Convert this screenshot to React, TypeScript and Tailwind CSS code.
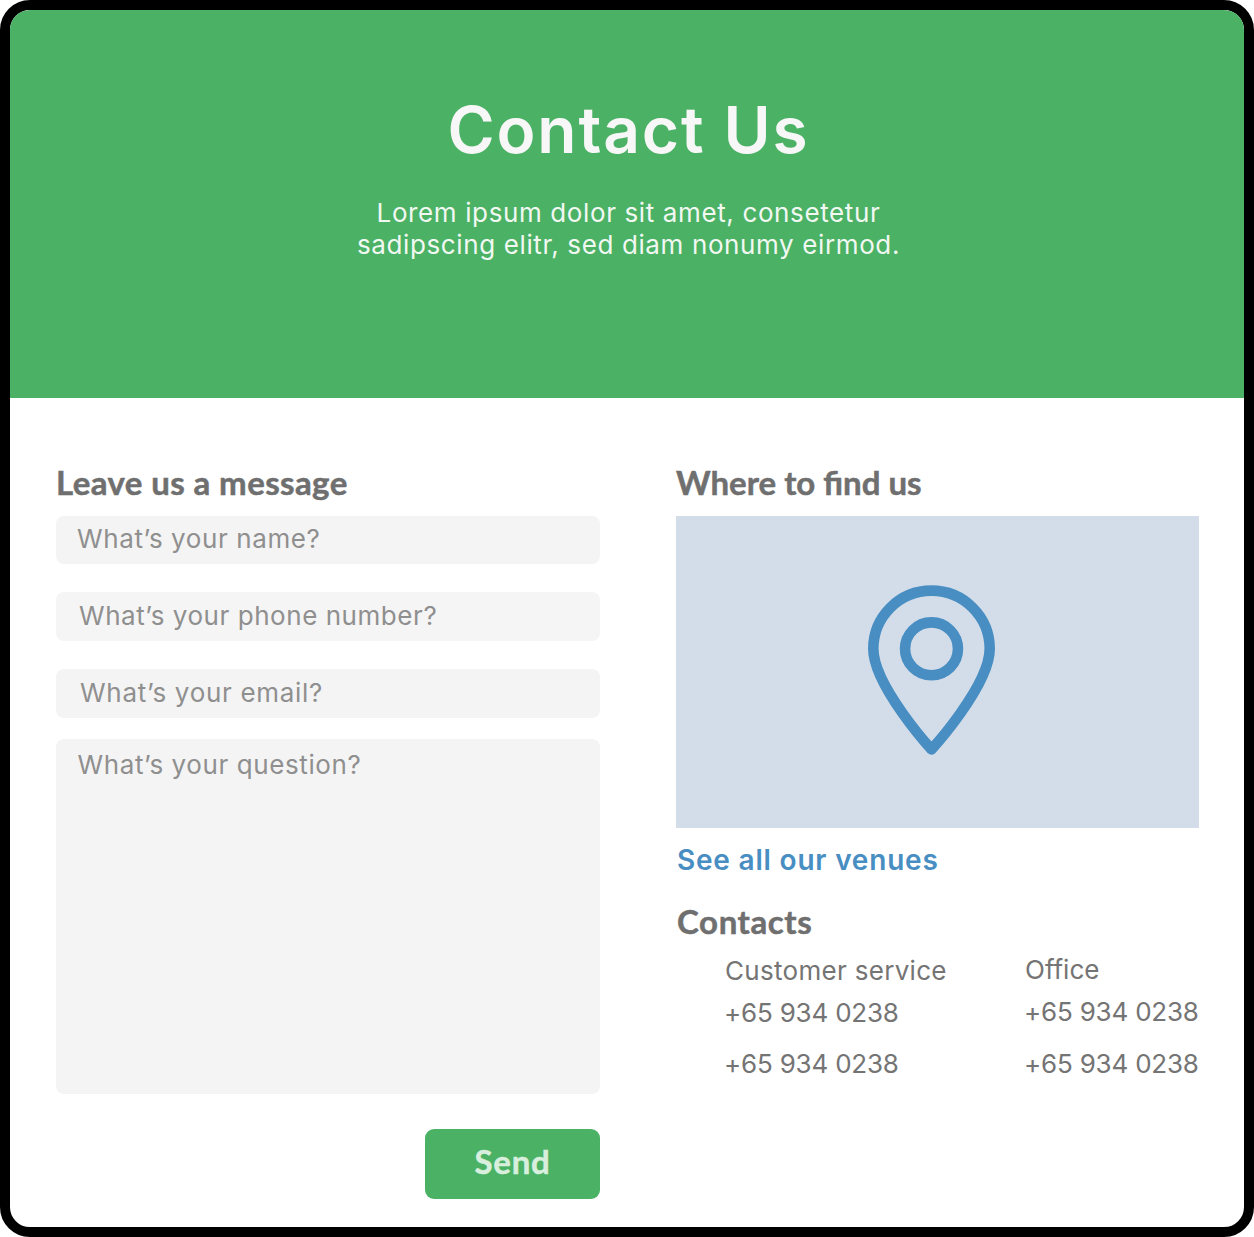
type FieldProps = { text: string; box: string; label: string };

function Field({ text, box, label }: FieldProps) {
  return (
    <div className={`rounded-lg ${box}`}>
      <span className={`block whitespace-nowrap text-[26px] leading-8 text-[#8f8f8f] ${label}`}>{text}</span>
    </div>
  );
}

function PinIcon() {
  return (
    <svg
      viewBox="0 0 12 16"
      className="h-[170px] w-[127px]"
      fill="none"
      stroke="#488ec2"
      strokeLinecap="round"
      strokeLinejoin="round"
    >
      <path d="M11.5 6C11.5 9.5 6 15.5 6 15.5S.5 9.5.5 6a5.5 5.5 0 0 1 11 0Z" />
      <circle cx="6" cy="6" r="2.5" />
    </svg>
  );
}

const heading =
  "h-10 whitespace-nowrap font-['Lato',sans-serif] text-[33px] font-bold leading-10 text-[#6f6f6f] [-webkit-text-stroke:0.5px_#6f6f6f]";

export default function App() {
  return (
    <div className="h-[1237px] w-[1254px] bg-white font-['Inter',sans-serif]">
      <div className="flex h-full flex-col overflow-hidden rounded-[30px] border-10 border-black bg-white">
        <header className="flex h-[388px] shrink-0 flex-col items-center bg-[#4bb165] pl-[3px] pt-[82px]">
          <h1 className="h-[76px] whitespace-nowrap text-[64px] font-semibold leading-[76px] tracking-[1.9px] text-[#f7f7f7]">
            Contact Us
          </h1>
          <p className="mt-[29px] whitespace-nowrap text-center text-[26px] leading-8 tracking-[0.62px] text-[#f1f8f2]">
            Lorem ipsum dolor sit amet, consetetur
            <br />
            sadipscing elitr, sed diam nonumy eirmod.
          </p>
        </header>

        <main className="flex justify-between pl-[46px] pr-[45px] pt-16">
          <form className="flex w-[544px] flex-col">
            <h2 className={`${heading} tracking-[0.4px]`}>Leave us a message</h2>
            <Field text="What’s your name?" box="mt-3.5 h-12 bg-[#f4f4f4]" label="pl-[21px] pt-[7px] tracking-[0.6px]" />
            <Field text="What’s your phone number?" box="mt-7 h-[49px] bg-[#f5f5f5]" label="pl-[23px] pt-2 tracking-[0.55px]" />
            <Field text="What’s your email?" box="mt-7 h-[49px] bg-[#f4f4f4]" label="pl-6 pt-2 tracking-[0.7px]" />
            <Field text="What’s your question?" box="mt-[21px] h-[355px] bg-[#f4f4f4]" label="pl-[21.5px] pt-2.5 tracking-[0.6px]" />
            <button
              type="button"
              className="mt-[35px] flex h-[70px] w-[175px] items-start justify-center self-end rounded-[9px] bg-[#4bb165] pt-3 font-['Lato',sans-serif] text-[33px] font-bold leading-10 tracking-[0.8px] text-[#d9efdd] [-webkit-text-stroke:0.5px_#d9efdd]"
            >
              Send
            </button>
          </form>

          <section className="flex w-[523px] flex-col">
            <h2 className={heading}>Where to find us</h2>
            <div className="mt-3.5 flex h-[312px] items-center justify-center bg-[#d3dde9] pb-1 pr-[13px]">
              <PinIcon />
            </div>
            <a className="mt-[15px] h-[34px] whitespace-nowrap pl-px text-[28px] font-semibold leading-[34px] tracking-[0.8px] text-[#488ec2]">
              See all our venues
            </a>
            <h2 className={`${heading} mt-6 pl-px tracking-[0.6px]`}>Contacts</h2>
            <div className="flex justify-between whitespace-nowrap pl-12 text-[26px] leading-8 tracking-[-0.2px] text-[#747474]">
              <div className="pt-3.5">
                <p className="pl-px tracking-[0.3px]">Customer service</p>
                <p className="mt-2.5">+65 934 0238</p>
                <p className="mt-[19px]">+65 934 0238</p>
              </div>
              <div className="w-[175px] pt-[13px]">
                <p className="pl-px tracking-[0px]">Office</p>
                <p className="mt-2.5">+65 934 0238</p>
                <p className="mt-5">+65 934 0238</p>
              </div>
            </div>
          </section>
        </main>
      </div>
    </div>
  );
}
